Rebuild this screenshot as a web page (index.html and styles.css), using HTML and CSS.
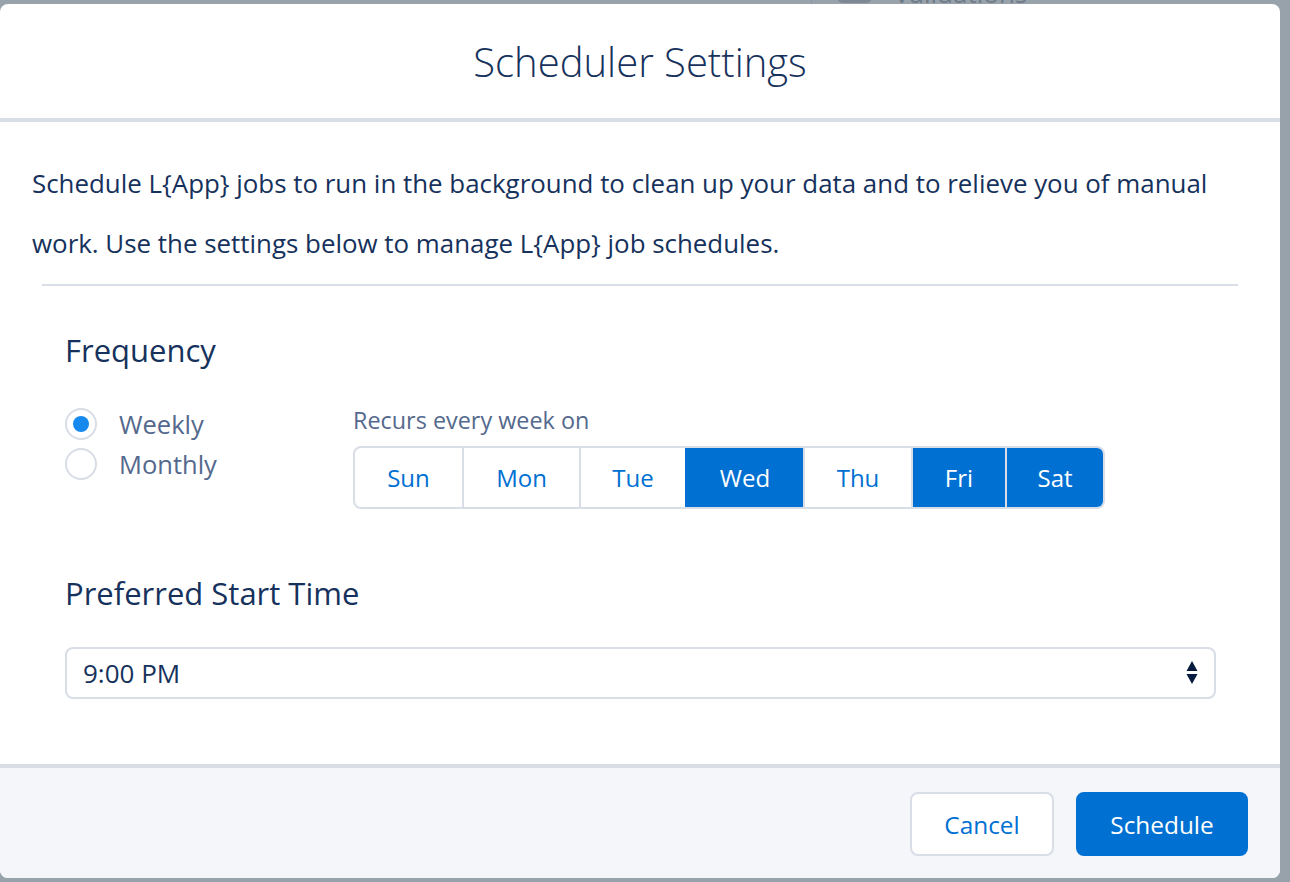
FILE: index.html
```html
<!DOCTYPE html>
<html>
<head>
<meta charset="utf-8">
<link rel="stylesheet" href="styles.css">
</head>
<body>
<div class="page-behind">
  <div class="behind-divider"></div>
  <div class="behind-icon"></div>
  <div class="behind-text">Validations</div>
</div>
<div class="modal">
  <header class="modal-header">
    <h2 class="modal-title">Scheduler Settings</h2>
  </header>
  <div class="modal-content">
    <p class="intro">Schedule L{App} jobs to run in the background to clean up your data and to relieve you of manual work. Use the settings below to manage L{App} job schedules.</p>
    <div class="rule"></div>
    <section class="section">
      <h3 class="section-title">Frequency</h3>
      <div class="freq-row">
        <div class="radios">
          <div class="radio-row">
            <span class="radio checked"></span>
            <span class="radio-label">Weekly</span>
          </div>
          <div class="radio-row">
            <span class="radio"></span>
            <span class="radio-label">Monthly</span>
          </div>
        </div>
        <div class="days">
          <div class="days-label">Recurs every week on</div>
          <div class="day-group">
            <span class="day d-sun">Sun</span>
            <span class="day d-mon">Mon</span>
            <span class="day d-tue">Tue</span>
            <span class="day d-wed selected">Wed</span>
            <span class="day d-thu">Thu</span>
            <span class="day d-fri selected">Fri</span>
            <span class="day d-sat selected">Sat</span>
          </div>
        </div>
      </div>
      <h3 class="section-title start-title">Preferred Start Time</h3>
      <div class="select">
        <span class="select-value">9:00 PM</span>
        <svg class="select-arrows" width="12" height="24" viewBox="0 0 12 24">
          <polygon points="6,0 11.5,10 0.5,10" fill="#061c3f"/>
          <polygon points="0.5,13 11.5,13 6,23" fill="#061c3f"/>
        </svg>
      </div>
    </section>
  </div>
  <footer class="modal-footer">
    <button class="btn btn-neutral">Cancel</button>
    <button class="btn btn-brand">Schedule</button>
  </footer>
</div>
</body>
</html>
```

FILE: styles.css
```css
html, body {
  margin: 0;
  padding: 0;
}
body {
  width: 1290px;
  height: 882px;
  background: #98a2ab;
  overflow: hidden;
  position: relative;
  font-family: "Open Sans", "Liberation Sans", sans-serif;
  color: #16325c;
}
.page-behind {
  position: absolute;
  top: 0;
  left: 0;
  width: 1290px;
  height: 4px;
  overflow: hidden;
}
.behind-divider {
  position: absolute;
  left: 811px;
  top: 0;
  width: 1px;
  height: 4px;
  background: #8c96a0;
}
.behind-icon {
  position: absolute;
  left: 837px;
  top: -30px;
  width: 35px;
  height: 33px;
  border-radius: 6px;
  background: #7d8894;
}
.behind-text {
  position: absolute;
  left: 894px;
  top: -20px;
  font-size: 26px;
  line-height: 26px;
  color: #6f7b88;
}
.modal {
  position: relative;
  margin-top: 4px;
  width: 1280px;
  height: 874px;
  background: #fff;
  border-radius: 8px;
  display: flex;
  flex-direction: column;
  overflow: hidden;
}
.modal-header {
  box-sizing: border-box;
  flex: 0 0 118px;
  border-bottom: 4px solid #d8dde6;
  display: flex;
  align-items: center;
  justify-content: center;
}
.modal-title {
  margin: 0;
  font-size: 40px;
  font-weight: 300;
  color: #16325c;
  padding-top: 0;
}
.modal-content {
  flex: 1;
  padding: 31px 32px 0 32px;
}
.intro {
  margin: 0;
  font-size: 25.9px;
  line-height: 60px;
  color: #16325c;
}
.rule {
  height: 2px;
  background: #d8dde6;
  margin: 11px 10px 0 10px;
}
.section {
  padding-left: 33px;
}
.section-title {
  margin: 44px 0 0 0;
  font-size: 31px;
  line-height: 40px;
  font-weight: 400;
  color: #16325c;
}
.freq-row {
  display: flex;
  align-items: flex-start;
  margin-top: 34px;
}
.radios {
  width: 288px;
}
.radio-row {
  display: flex;
  align-items: center;
  height: 40px;
}
.radio {
  box-sizing: border-box;
  width: 32px;
  height: 32px;
  border: 2px solid #d8dde6;
  border-radius: 50%;
  display: flex;
  align-items: center;
  justify-content: center;
}
.radio.checked::after {
  content: "";
  width: 16px;
  height: 16px;
  border-radius: 50%;
  background: #1589ee;
}
.radio-label {
  margin-left: 22px;
  font-size: 25.5px;
  color: #54698d;
}
.days-label {
  font-size: 23.4px;
  line-height: 32px;
  color: #54698d;
}
.day-group {
  margin-top: 10px;
  display: flex;
  height: 63px;
  box-sizing: border-box;
  border: 2px solid #d8dde6;
  border-radius: 8px;
  overflow: hidden;
  width: 752px;
}
.day {
  display: flex;
  align-items: center;
  justify-content: center;
  font-size: 24px;
  color: #0070d2;
  border-left: 2px solid #d8dde6;
  box-sizing: border-box;
}
.day:first-child {
  border-left: none;
}
.day.selected {
  background: #0070d2;
  color: #fff;
}
.d-sun { width: 107px; }
.d-mon { width: 117px; }
.d-tue { width: 106px; }
.d-wed { width: 118px; border-left-color: #0070d2; }
.d-thu { width: 108px; }
.d-fri { width: 94px; }
.d-sat { width: 98px; }
.start-title {
  margin-top: 64px;
}
.select {
  margin-top: 34px;
  box-sizing: border-box;
  width: 1151px;
  height: 52px;
  border: 2px solid #d8dde6;
  border-radius: 8px;
  display: flex;
  align-items: center;
  justify-content: space-between;
  padding: 0 16px 0 16px;
}
.select-value {
  font-size: 26px;
  color: #16325c;
}
.select-arrows {
  display: block;
}
.modal-footer {
  box-sizing: border-box;
  flex: 0 0 114px;
  border-top: 4px solid #d8dde6;
  background: #f4f6f9;
  display: flex;
  align-items: flex-start;
  justify-content: flex-end;
  padding: 24px 32px 0 0;
  gap: 22px;
}
.btn {
  height: 64px;
  border-radius: 8px;
  font-family: "Open Sans", "Liberation Sans", sans-serif;
  font-size: 24.4px;
  box-sizing: border-box;
  cursor: pointer;
  padding: 0;
}
.btn-neutral {
  width: 144px;
  background: #fff;
  border: 2px solid #d8dde6;
  color: #0070d2;
}
.btn-brand {
  width: 172px;
  background: #0070d2;
  border: 2px solid #0070d2;
  color: #fff;
}
```
